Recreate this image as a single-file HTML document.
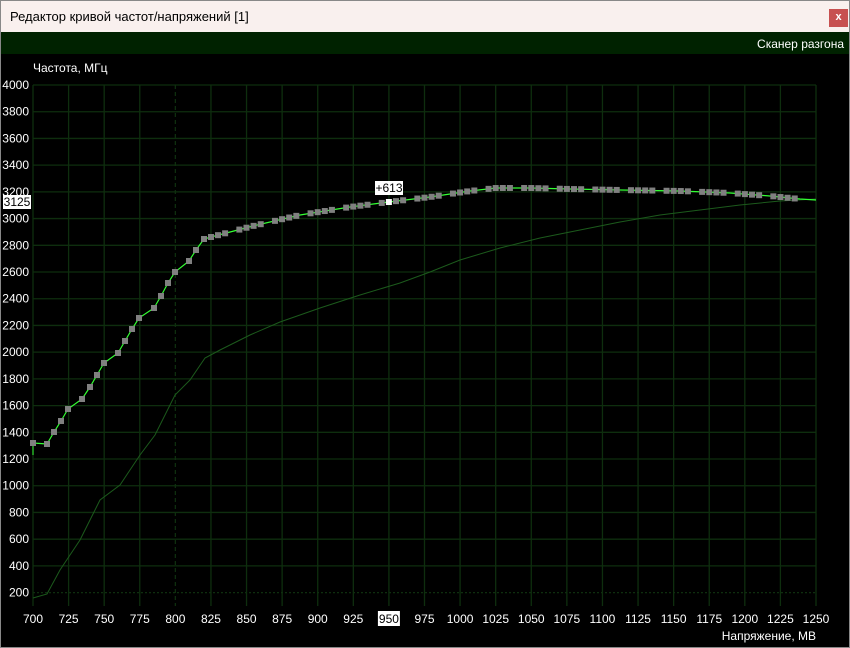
<!DOCTYPE html>
<html><head><meta charset="utf-8"><style>
body{margin:0;width:850px;height:648px;overflow:hidden;background:#000;font-family:"Liberation Sans",sans-serif}
#w{position:absolute;left:0;top:0;width:848px;height:646px;border:1px solid #888;background:#000}
#t{position:absolute;left:0;top:0;width:848px;height:31px;background:#f9f0ee;font-size:13px;color:#000}
#t span{position:absolute;left:9px;top:8px}
#x{position:absolute;left:828px;top:8px;width:19px;height:18px;background:#c75050;color:#fff;font-size:11px;text-align:center;line-height:17px;font-weight:bold}
#g{position:absolute;left:0;top:31px;width:848px;height:22px;background:#002200;color:#fff;font-size:12px}
#g span{position:absolute;right:5px;top:5px}
svg{position:absolute;left:0;top:0}
</style></head><body><div id="w">
<div id="t"><span>Редактор кривой частот/напряжений [1]</span><div id="x">x</div></div>
<div id="g"><span>Сканер разгона</span></div>
<svg id="s" width="850" height="648" style="top:-1px;left:-1px"></svg>
</div>
<script>
var s=document.getElementById('s'),h='';
function X(v){return 33+(v-700)*783/550}
function Y(f){return 85+(4000-f)*507.6/3800}
var gc='#0e2e0e';
for(var i=0;i<=22;i++){var x=X(700+25*i);h+='<line x1="'+x+'" y1="85" x2="'+x+'" y2="606" stroke="'+gc+'" stroke-width="1.3"'+(i==4?' stroke-dasharray="4,3" stroke="#1a3a1a"':'')+'/>';
var v=700+25*i;h+=(v==950?'<rect x="'+(x-11)+'" y="611" width="22" height="15" fill="#fff"/>':'')+'<text x="'+x+'" y="623" fill="'+(v==950?'#000':'#fff')+'" font-size="12" text-anchor="middle">'+v+'</text>';}
for(var f=4000;f>=200;f-=200){var y=Y(f);h+='<line x1="33" y1="'+y+'" x2="816" y2="'+y+'" stroke="'+gc+'" stroke-width="1.3"'+(f==200?' stroke-dasharray="2,2" stroke="#1d4d1d"':'')+'/>';h+='<text x="29" y="'+(y+4)+'" fill="#fff" font-size="12" text-anchor="end">'+f+'</text>';}
h+='<text x="33" y="72" fill="#fff" font-size="12">Частота, МГц</text>';
h+='<text x="816" y="640" fill="#fff" font-size="12" text-anchor="end">Напряжение, МВ</text>';
var d=[[33,598],[47,594],[60,570],[70,555],[80,540],[90,520],[100,500],[120,485],[140,455],[155,435],[175,395],[190,380],[205,358],[220,350],[250,335],[280,322],[320,308],[360,295],[400,283],[430,272],[460,260],[500,248],[540,238],[580,230],[620,222],[660,215],[700,210],[740,205],[780,201],[816,199]];
h+='<polyline fill="none" stroke="#1c5a1c" stroke-width="1" points="'+d.map(function(p){return p.join(',')}).join(' ')+'"/>';
var k=[[33,443],[47,444],[54,432],[61,421],[68,409],[82,399],[90,387],[97,375],[104,363],[118,353],[125,341],[132,329],[139,318],[154,308],[161,296],[168,283],[175,272],[189,261],[196,250],[204,239],[211,237],[253,226],[300,215],[350,207],[389,202],[430,197],[470,191],[496,188],[530,188],[570,189],[620,190],[680,191],[730,193],[770,196],[800,199],[816,200]];
function ky(x){for(var i=0;i<k.length-1;i++)if(x<=k[i+1][0]){var a=k[i],b=k[i+1];return a[1]+(b[1]-a[1])*(x-a[0])/(b[0]-a[0]);}return 200}
h+='<line x1="33" y1="443" x2="33" y2="455" stroke="#3f3"/>';
h+='<polyline fill="none" stroke="#33ff33" stroke-width="1.2" points="'+k.map(function(p){return p.join(',')}).join(' ')+'"/>';
var pts=k.slice(0,21).map(function(p){return p[0]});var n=0;for(var x=218;x<=800;x+=7.12){n++;if(n%5!=3)pts.push(x);}
pts.forEach(function(x){var y=ky(x);var hl=Math.abs(x-389)<3;h+='<rect x="'+(x-3)+'" y="'+(y-3)+'" width="6" height="6" fill="'+(hl?'#fff':'#808080')+'"/>';});
h+='<rect x="375" y="181" width="28" height="14" fill="#fff"/><text x="389" y="192" font-size="12" text-anchor="middle" fill="#000">+613</text>';
h+='<rect x="3" y="195" width="28" height="14" fill="#fff"/><text x="17" y="206" font-size="12" text-anchor="middle" fill="#000">3125</text>';
s.innerHTML=h;
</script></body></html>
